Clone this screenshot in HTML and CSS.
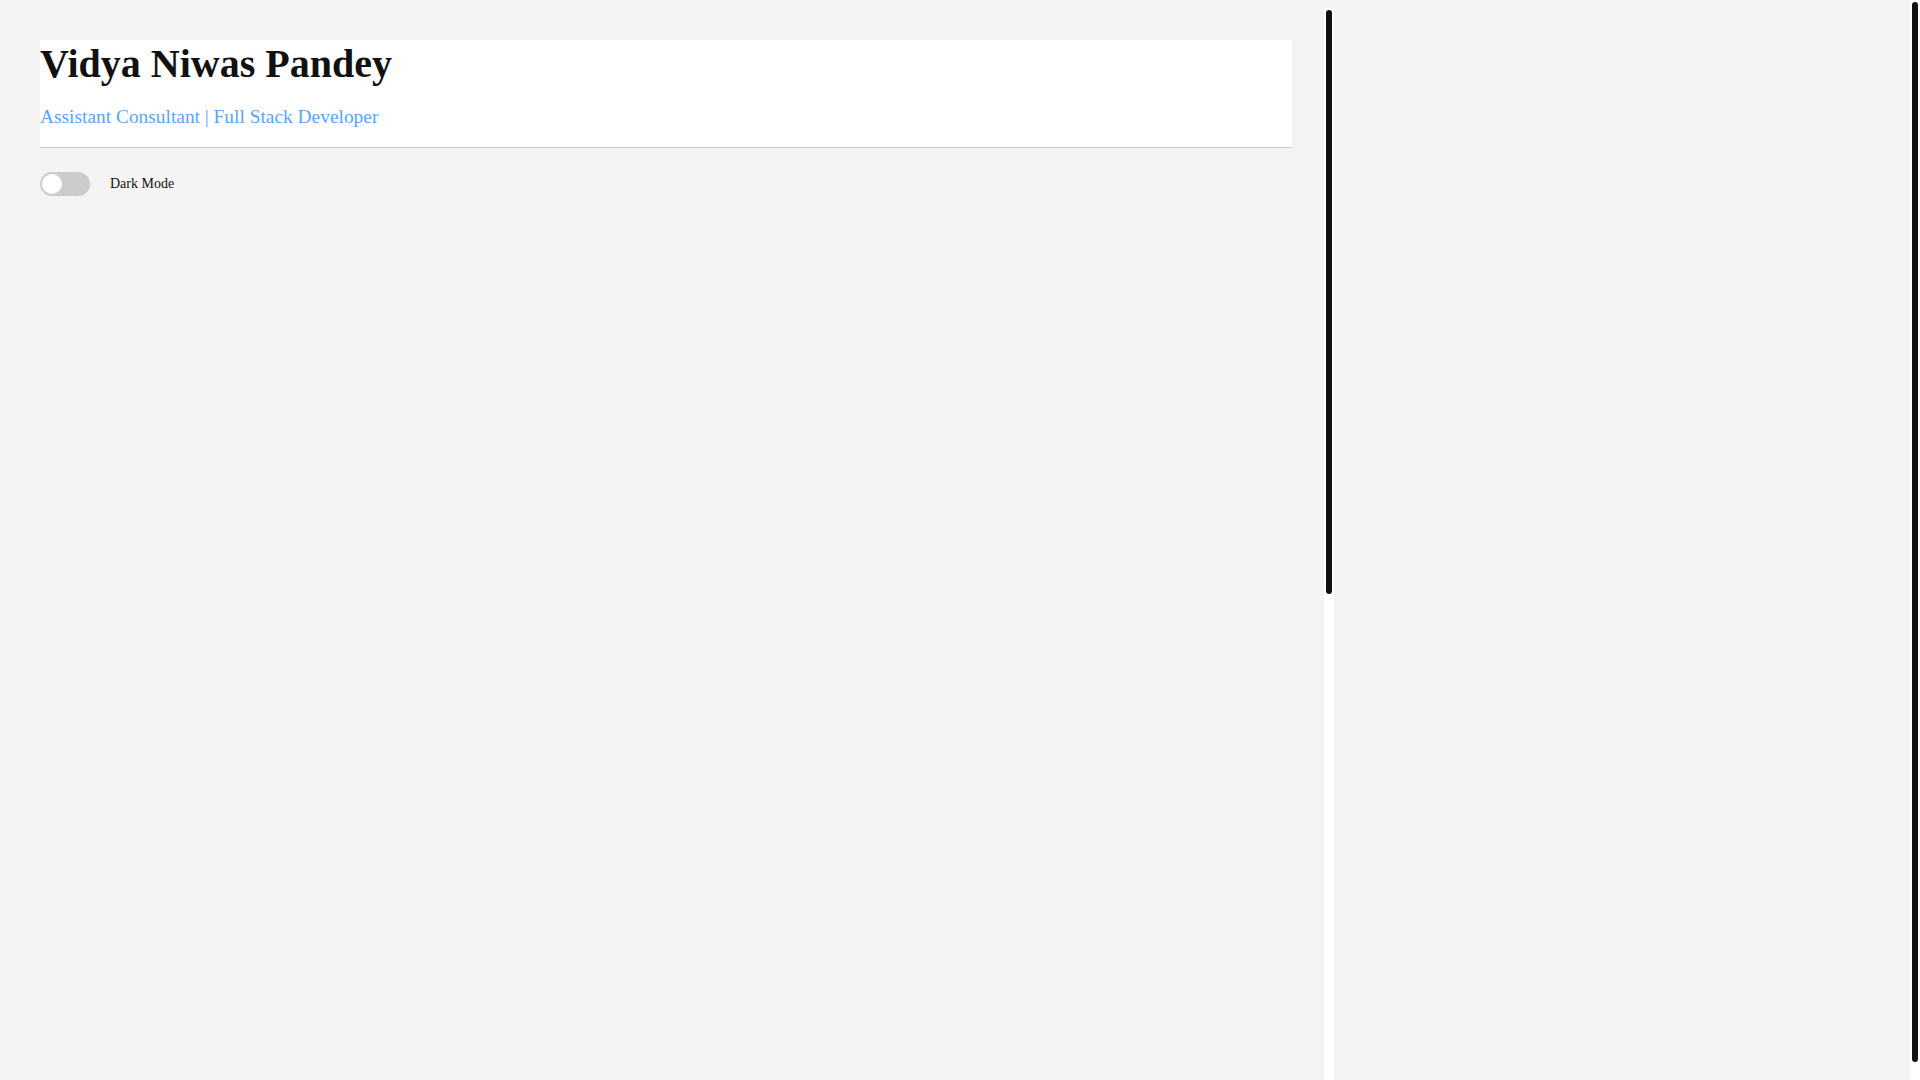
FILE: index.html
```html
<!DOCTYPE html>
<html lang="en">
<head>
<meta charset="utf-8">
<title>Vidya Niwas Pandey</title>
<link rel="stylesheet" href="styles.css">
</head>
<body>
<div class="layout">
  <div class="panel">
    <div class="panel-scroll">
      <header class="card">
        <h1 class="name">Vidya Niwas Pandey</h1>
        <p class="role">Assistant Consultant | Full Stack Developer</p>
      </header>
      <div class="mode-row">
        <label class="switch"><span class="knob"></span></label>
        <span class="mode-label">Dark Mode</span>
      </div>
      <main class="content"></main>
    </div>
    <div class="vbar"><div class="vthumb panel-thumb"></div></div>
  </div>
  <aside class="side"></aside>
</div>
<div class="vbar page-bar"><div class="vthumb page-thumb"></div></div>
</body>
</html>
```
FILE: styles.css
```css
html {
  background: #f4f4f4;
  scrollbar-width: none;
}
body {
  margin: 8px 18px 8px 8px;
  background: #f4f4f4;
  font-family: "Liberation Serif", "Times New Roman", serif;
  color: #111;
}
.layout {
  display: grid;
  grid-template-columns: 70% 30%;
}
.panel {
  display: flex;
  height: 100vh;
}
.panel-scroll {
  flex: 1;
  min-width: 0;
  overflow-y: auto;
  scrollbar-width: none;
  padding: 32px;
  box-sizing: border-box;
}
.vbar {
  width: 10px;
  flex: none;
  background: #fff;
  padding: 2px;
  box-sizing: border-box;
}
.vthumb {
  background: #111;
  border-radius: 3px;
}
.panel-thumb {
  height: 584px;
}
.page-bar {
  position: fixed;
  top: 0;
  right: 0;
  height: 100vh;
}
.page-thumb {
  height: 1060px;
}
.card {
  background: #fff;
  border-bottom: 1px solid #ccc;
  padding-bottom: 19px;
}
.name {
  margin: 0;
  font-size: 40px;
  font-weight: bold;
  color: #111;
}
.role {
  margin: 19px 0 0;
  font-size: 19.4px;
  color: #55a6ff;
}
.mode-row {
  display: flex;
  align-items: center;
  gap: 20px;
  margin-top: 24px;
}
.switch {
  position: relative;
  width: 50px;
  height: 24px;
  border-radius: 12px;
  background: #ccc;
  display: block;
}
.knob {
  position: absolute;
  left: 2px;
  top: 2px;
  width: 20px;
  height: 20px;
  border-radius: 50%;
  background: #fff;
}
.mode-label {
  font-size: 14px;
  color: #111;
}
.content {
  min-height: 1764px;
}
.side {
  min-height: 100px;
}
```
